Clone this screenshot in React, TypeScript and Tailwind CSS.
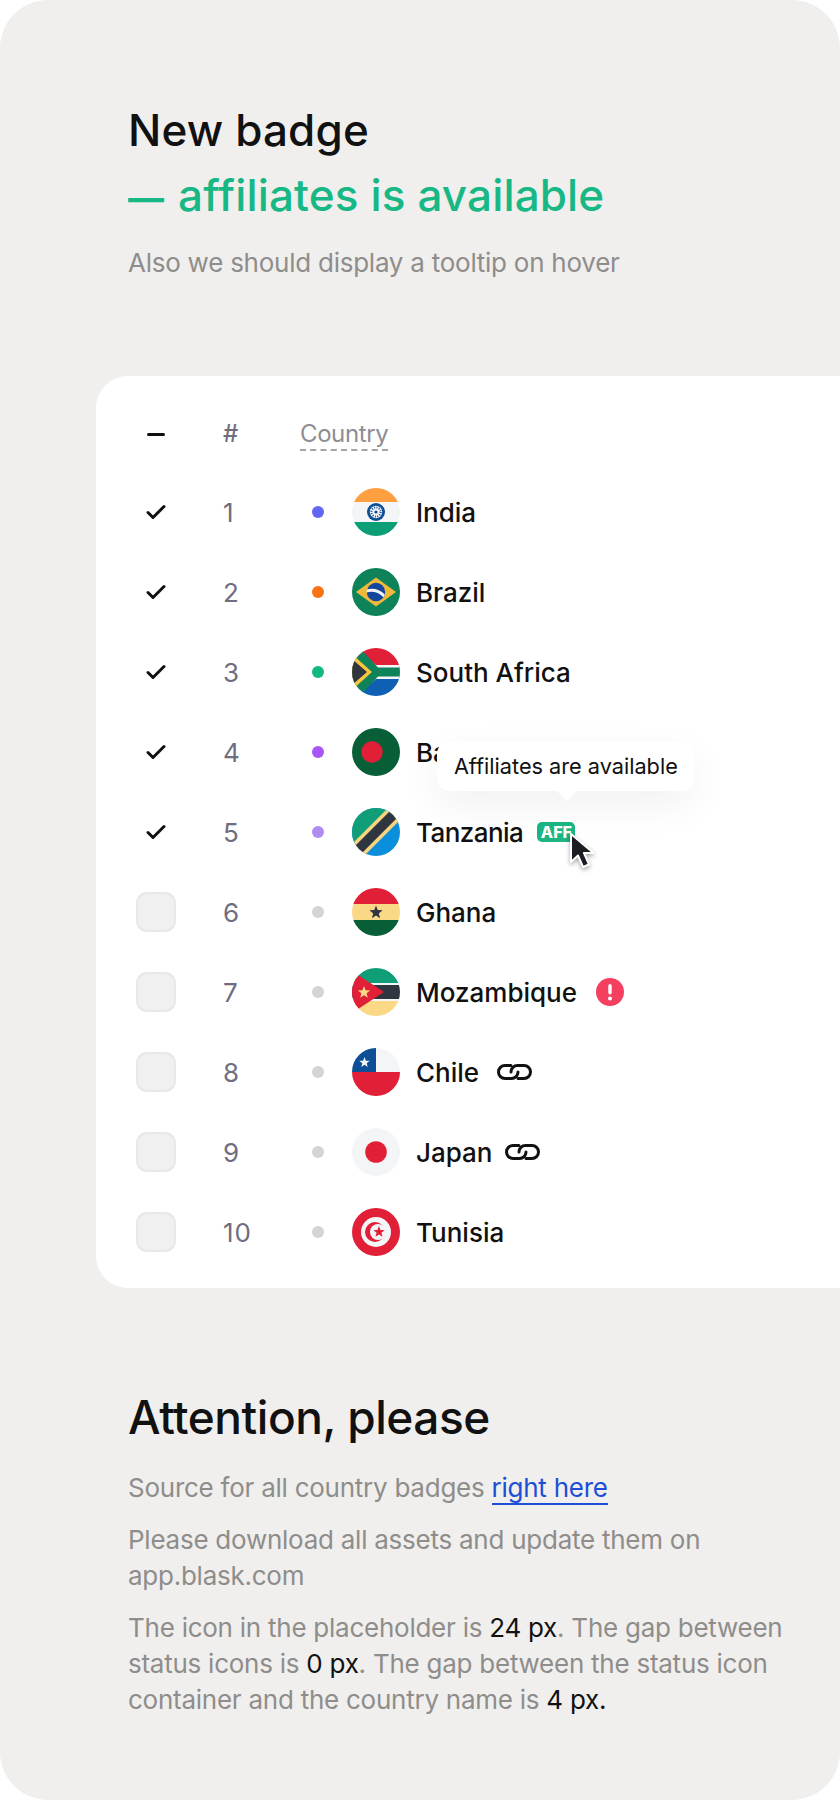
const star = (cx: number, cy: number, r: number) => {
  const pts: string[] = [];
  for (let i = 0; i < 10; i++) {
    const rad = i % 2 === 0 ? r : r * 0.42;
    const a = (Math.PI / 5) * i - Math.PI / 2;
    pts.push(`${(cx + rad * Math.cos(a)).toFixed(2)},${(cy + rad * Math.sin(a)).toFixed(2)}`);
  }
  return pts.join(" ");
};

const flags: Record<string, React.ReactNode> = {
  India: (
    <>
      <rect width="48" height="48" fill="#f3f5f7" />
      <rect width="48" height="14" fill="#ff9f40" />
      <rect y="34" width="48" height="14" fill="#0b9e77" />
      <circle cx="24" cy="24" r="9" fill="#0d4f96" />
      <circle cx="24" cy="24" r="6.2" fill="#f3f5f7" />
      <circle cx="24" cy="24" r="4.6" fill="none" stroke="#0d4f96" strokeWidth="2" strokeDasharray="1 1.4" />
      <circle cx="24" cy="24" r="1.6" fill="#0d4f96" />
    </>
  ),
  Brazil: (
    <>
      <rect width="48" height="48" fill="#0e8259" />
      <polygon points="24,9.5 44,24 24,38.5 4,24" fill="#f0b93b" />
      <circle cx="24" cy="24" r="9.2" fill="#13479b" />
      <path d="M15 21.5c6-1.8 13-.2 17.8 5-.4 1-.8 1.900-1.400 2.700-4.600-4.700-10.600-6.400-16.800-4.800-.1-1 .1-2 .4-2.900z" fill="#f3f5f7" />
    </>
  ),
  "South Africa": (
    <>
      <rect width="48" height="24" fill="#e11f36" />
      <rect y="24" width="48" height="24" fill="#0f5fb4" />
      <polygon points="4,0 24,17 48,17 48,31 24,31 4,48 0,48 0,0" fill="#f3f5f7" />
      <polygon points="0,0 8,0 26,19.500 48,19.500 48,28.500 26,28.500 8,48 0,48" fill="#0e8259" />
      <polygon points="0,6 20,24 0,42" fill="#f9c53c" />
      <polygon points="0,11 15,24 0,37" fill="#2f3640" />
    </>
  ),
  Bangladesh: (
    <>
      <rect width="48" height="48" fill="#075e37" />
      <circle cx="20" cy="24" r="10.700" fill="#e11f36" />
    </>
  ),
  Tanzania: (
    <>
      <rect width="48" height="48" fill="#0b8fdd" />
      <polygon points="0,0 48,0 0,48" fill="#0f9e78" />
      <polygon points="36,0 48,0 48,12 12,48 0,48 0,36" fill="#f9d580" />
      <polygon points="39,2 46,9 9,46 2,39" fill="#2f3640" />
    </>
  ),
  Ghana: (
    <>
      <rect width="48" height="16" fill="#e11f36" />
      <rect y="16" width="48" height="16" fill="#fad886" />
      <rect y="32" width="48" height="16" fill="#075e37" />
      <polygon points={star(24, 24.500, 7)} fill="#2f3640" />
    </>
  ),
  Mozambique: (
    <>
      <rect width="48" height="15" fill="#0f9e78" />
      <rect y="15" width="48" height="18" fill="#f3f5f7" />
      <rect y="17" width="48" height="14" fill="#2f3640" />
      <rect y="33" width="48" height="15" fill="#fad886" />
      <polygon points="0,3 32,24 0,45" fill="#e11f36" />
      <polygon points={star(12, 24.500, 6.500)} fill="#fad886" />
    </>
  ),
  Chile: (
    <>
      <rect width="48" height="24" fill="#f3f5f7" />
      <rect y="24" width="48" height="24" fill="#e11f36" />
      <rect width="24" height="24" fill="#0d4f96" />
      <polygon points={star(12.500, 14.500, 5.500)} fill="#f3f5f7" />
    </>
  ),
  Japan: (
    <>
      <rect width="48" height="48" fill="#f3f5f7" />
      <circle cx="24" cy="24" r="10.800" fill="#e11f36" />
    </>
  ),
  Tunisia: (
    <>
      <rect width="48" height="48" fill="#e11f36" />
      <circle cx="24" cy="24" r="15" fill="#f3f5f7" />
      <circle cx="23" cy="24" r="10" fill="#e11f36" />
      <circle cx="26" cy="24" r="8" fill="#f3f5f7" />
      <polygon points={star(27, 24, 6)} fill="#e11f36" />
    </>
  ),
};

const rows = [
  { n: 1, name: "India", dot: "bg-[#6366f1]", checked: true },
  { n: 2, name: "Brazil", dot: "bg-[#f97316]", checked: true },
  { n: 3, name: "South Africa", dot: "bg-[#10b981]", checked: true },
  { n: 4, name: "Bangladesh", dot: "bg-[#a855f7]", checked: true },
  { n: 5, name: "Tanzania", dot: "bg-[#b08cf2]", checked: true, extra: "aff" },
  { n: 6, name: "Ghana", dot: "bg-[#d4d4d4]", checked: false },
  { n: 7, name: "Mozambique", dot: "bg-[#d4d4d4]", checked: false, extra: "alert" },
  { n: 8, name: "Chile", dot: "bg-[#d4d4d4]", checked: false, extra: "link" },
  { n: 9, name: "Japan", dot: "bg-[#d4d4d4]", checked: false, extra: "link" },
  { n: 10, name: "Tunisia", dot: "bg-[#d4d4d4]", checked: false },
];

function Check() {
  return (
    <svg width="20" height="16" viewBox="0 0 20 16" fill="none" className="ml-[10px]">
      <path d="M2 8.500l5 5L18 2.500" stroke="#111" strokeWidth="3" strokeLinecap="round" strokeLinejoin="round" />
    </svg>
  );
}

function LinkIcon() {
  return (
    <svg width="35" height="18" viewBox="0 0 35 18" fill="none">
      <path d="M14 2.500H8a6.500 6.500 0 0 0 0 13h6.500a6.500 6.500 0 0 0 6.500-6.500" stroke="#111" strokeWidth="3" strokeLinecap="round" />
      <path d="M21 15.500h6a6.500 6.500 0 0 0 0-13h-6.500a6.500 6.500 0 0 0-6.500 6.500" stroke="#111" strokeWidth="3" strokeLinecap="round" />
    </svg>
  );
}

function AlertIcon() {
  return (
    <svg width="28" height="28" viewBox="0 0 28 28">
      <circle cx="14" cy="14" r="14" fill="#f43f5e" />
      <rect x="12.300" y="6" width="3.400" height="10.500" rx="1.700" fill="#fff" />
      <circle cx="14" cy="20.500" r="2" fill="#fff" />
    </svg>
  );
}

function AffBadge() {
  return (
    <span className="relative flex h-5 w-[38px] items-center justify-center rounded-[5px] bg-[#1db584] text-[16px] font-extrabold leading-none text-white">
      AFF
      <span className="absolute bottom-[51px] left-[-100px] z-10 flex h-[49px] w-[257px] items-center justify-center rounded-[12px] bg-white text-[21.700px] font-normal text-[#111] shadow-[0_14px_40px_rgba(0,0,0,0.06)]">
        Affiliates are available
        <span className="absolute bottom-[-7px] left-[123px] h-[14px] w-[14px] rotate-45 bg-white" />
      </span>
      <svg width="26" height="38" viewBox="0 0 26 38" className="absolute left-[32px] top-[10px] z-10 drop-shadow-[0_2px_2px_rgba(0,0,0,0.35)]">
        <path
          d="M2 2v28l7-6.500 5 11.500 6-2.500-5-11.500h9.500z"
          fill="#1a1d22"
          stroke="#fff"
          strokeWidth="2"
          strokeLinejoin="round"
        />
      </svg>
    </span>
  );
}

export default function App() {
  return (
    <div className="h-[1800px] w-[840px] overflow-hidden bg-white font-['Inter',sans-serif]">
      <div className="h-full overflow-hidden rounded-[48px] bg-[#f0efed] pt-[98px]">
        <header className="px-[128px]">
          <h1 className="text-[44px] font-medium leading-[65px] tracking-[0.15px] text-[#111]">
            New badge
            <br />
            <span className="text-[#17b885]">
              <span className="inline-block w-[50px] text-[36px] font-bold leading-none">—</span>
              affiliates is available
            </span>
          </h1>
          <p className="mt-[17px] text-[26px] leading-9 tracking-[-0.25px] text-[#8e8d8b]">
            Also we should display a tooltip on hover
          </p>
        </header>

        <section className="ml-[96px] mt-[95px] h-[912px] rounded-l-[32px] bg-white pl-10 pt-5">
          <div className="flex h-[76px] items-center text-[24px]">
            <span className="w-[87px]">
              <span className="ml-[11px] block h-[3px] w-[18px] rounded-full bg-[#111]" />
            </span>
            <span className="w-[77px] font-medium text-[#6f6e80]">#</span>
            <span className="mt-px border-b-2 border-dashed border-[#a3a3a8] text-[24px] leading-[30px] tracking-[-0.4px] text-[#8e8d93]">
              Country
            </span>
          </div>
          {rows.map((row) => (
            <div key={row.n} className="flex h-20 items-center">
              <span className="w-[87px]">
                {row.checked ? (
                  <Check />
                ) : (
                  <span className="block h-10 w-10 rounded-[11px] border-2 border-[#e8e8e8] bg-[#f0f0f0]" />
                )}
              </span>
              <span className="w-[89px] text-[26px] tracking-[0.8px] text-[#6f6e80]">{row.n}</span>
              <span className={`h-3 w-3 rounded-full ${row.dot}`} />
              <svg width="48" height="48" viewBox="0 0 48 48" className="ml-7 rounded-full">
                {flags[row.name]}
              </svg>
              <span className={`ml-4 text-[26px] font-medium text-[#111] ${row.name === "Tanzania" ? "tracking-[-0.55px]" : ""}`}>
                {row.name}
              </span>
              {row.extra === "aff" && <span className="ml-[14px]"><AffBadge /></span>}
              {row.extra === "alert" && <span className="ml-[19px]"><AlertIcon /></span>}
              {row.extra === "link" && (
                <span className={row.name === "Japan" ? "ml-[13px]" : "ml-[18px]"}>
                  <LinkIcon />
                </span>
              )}
            </div>
          ))}
        </section>

        <section className="px-[128px] pt-[97px]">
          <h2 className="text-[46px] font-medium leading-[65px] tracking-[-0.01em] text-[#111]">
            Attention, please
          </h2>
          <div className="mt-[20px] w-[660px] space-y-4 text-[26px] leading-9 tracking-[-0.25px] text-[#8e8d8b]">
            <p>
              Source for all country badges{" "}
              <a className="border-b-2 border-[#1d4ed8] text-[#1d4ed8]">right here</a>
            </p>
            <p>Please download all assets and update them on app.blask.com</p>
            <p>
              The icon in the placeholder is <span className="text-[#111]">24 px</span>. The gap between status
              icons is <span className="text-[#111]">0 px</span>. The gap between the status icon container and the
              country name is <span className="text-[#111]">4 px.</span>
            </p>
          </div>
        </section>
      </div>
    </div>
  );
}
